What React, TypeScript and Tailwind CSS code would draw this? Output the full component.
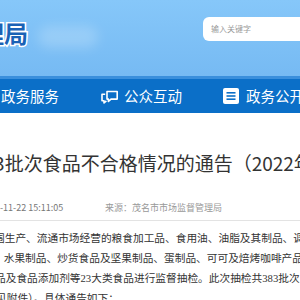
const cjk = "font-['Noto_Sans_CJK_SC','Noto_Sans',sans-serif]";

function ChatIcon() {
  return (
    <svg width="18" height="16" viewBox="0 0 18 16" fill="none" stroke="white" strokeWidth="1.6" strokeLinejoin="round">
      <path d="M6 3.5h10.2v7.6H10l-2.6 2.4v-2.4H6z" />
      <path d="M4.2 6.2H1v6.6h2v2.2l2.4-2.2" />
    </svg>
  );
}

function ListIcon() {
  return (
    <svg width="16" height="16" viewBox="0 0 16 16">
      <rect x="0" y="0" width="16" height="16" rx="2" fill="white" />
      <rect x="3.5" y="4" width="9" height="1.6" fill="#0b6fc8" />
      <rect x="3.5" y="7.2" width="9" height="1.6" fill="#0b6fc8" />
      <rect x="3.5" y="10.4" width="9" height="1.6" fill="#0b6fc8" />
    </svg>
  );
}

const bodyLines = [
  { text: '围生产、流通市场经营的粮食加工品、食用油、油脂及其制品、调', ml: '-ml-[6px]' },
  { text: '、水果制品、炒货食品及坚果制品、蛋制品、可可及焙烤咖啡产品', ml: '-ml-[7px]' },
  { text: '品及食品添加剂等23大类食品进行监督抽检。此次抽检共383批次', ml: '-ml-[5px]' },
  { text: '见附件）。具体通告如下：', ml: '-ml-[4px]' },
];

export default function App() {
  return (
    <div className={`w-[300px] h-[300px] overflow-hidden bg-white ${cjk}`}>
      <header className="relative h-[76px] bg-gradient-to-b from-[#86c7f9] to-[#76baf3] overflow-hidden">
        <div className="absolute left-[38px] top-[26px] h-[22px] w-[60px] rounded-full bg-white/20 blur-[6px]" />
        <div className="flex items-start justify-between">
          <div className="mt-[19px] -ml-[20px] text-[24px] leading-[28px] font-bold text-[#1a62b6] [-webkit-text-stroke:3px_white] [paint-order:stroke_fill]">
            理局
          </div>
          <div className="mt-[17px] -mr-[10px] flex h-[24px] w-[107px] items-center rounded-[6px] bg-white pl-[8px]">
            <span className="text-[8px] text-[#999]">输入关键字</span>
          </div>
        </div>
      </header>
      <div className="h-[3px] bg-[#3a8fdc]" />
      <nav className="flex h-[34px] items-center bg-[#0b6fc8] text-[14.5px] text-white whitespace-nowrap">
        <span className="ml-[1px]">政务服务</span>
        <span className="ml-[42px] flex items-center">
          <ChatIcon />
          <span className="ml-[5px]">公众互动</span>
        </span>
        <span className="ml-[41px] flex items-center">
          <ListIcon />
          <span className="ml-[7px]">政务公开</span>
        </span>
      </nav>
      <h1 className="mt-[37px] -ml-[27px] whitespace-nowrap text-[19px] leading-[25px] text-[#333]">
        383批次食品不合格情况的通告（2022年第
      </h1>
      <div className="mt-[27px] flex whitespace-nowrap text-[9px] leading-[12px]">
        <span className="w-[105px] text-[#777]">-11-22 15:11:05</span>
        <span className="text-[#999]">来源：茂名市市场监督管理局</span>
      </div>
      <div className="mt-[6px] h-px bg-[#e3e3e3]" />
      <div className="mt-[7px] text-[10.7px] leading-[20px] text-[#333] font-['Liberation_Serif','Noto_Sans_CJK_SC',serif]">
        {bodyLines.map(line => (
          <div key={line.text} className={`whitespace-nowrap ${line.ml}`}>
            {line.text}
          </div>
        ))}
      </div>
    </div>
  );
}
